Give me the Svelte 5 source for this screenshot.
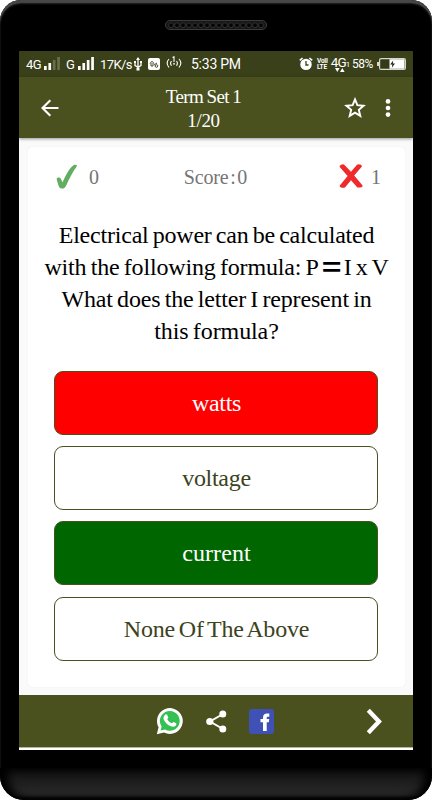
<script>
  const question = [
    { text: 'Electrical power can be calculated', track: -0.21, word: -1.6 },
    { text: 'with the following formula: P', tail: 'I x V', track: -0.16, word: -1.6 },
    { text: 'What does the letter I represent in', track: -0.16, word: -1.6 },
    { text: 'this formula?', track: -0.1, word: -1.6 }
  ];
  const answers = [
    { text: 'watts', state: 'wrong', track: -0.3 },
    { text: 'voltage', state: '', track: -0.3 },
    { text: 'current', state: 'right', track: 0.1 },
    { text: 'None Of The Above', state: '', track: -0.2 }
  ];
  const holes = Array.from({ length: 16 }, (_, i) => i);
</script>

<div class="phone">
  <div class="speaker">
    <svg width="102" height="10" viewBox="0 0 102 10">
      <rect x=".5" y=".5" width="101" height="9" rx="4.5" fill="#171717" stroke="#3c3c3c" />
      {#each holes as i}
        <circle cx={6 + i * 6} cy="5.2" r="2.4" fill="#050505" stroke="#383838" stroke-width=".8" />
      {/each}
    </svg>
  </div>

  <div class="screen">
    <div class="status">
      <span class="net">4G</span>
      <svg class="bars1" width="16" height="13" viewBox="0 0 16 13">
        <path d="M0 9h2.7v4H0zM4.4 6h2.7v7H4.4z" fill="#fff" />
        <path d="M8.8 3h2.7v10H8.8zM13.2 0h2.7v13h-2.7z" fill="#697047" />
      </svg>
      <span class="g">G</span>
      <svg class="bars2" width="16" height="13" viewBox="0 0 16 13">
        <path d="M0 9h2.7v4H0zM4.4 6h2.7v7H4.4zM8.8 3h2.7v10H8.8zM13.2 0h2.7v13h-2.7z" fill="#fff" />
      </svg>
      <span class="speed">17K/s</span>
      <svg class="usb" width="8" height="14" viewBox="0 0 8 14" fill="none" stroke="#fff" stroke-width="1.3">
        <path d="M4 1v11M1 5v3.5l3 1.5 3-1.5V5" />
        <path d="M2 3l2-3 2 3zM0 4h2v2H0zM6 4h2v2H6zM2.500 10.500h3v3h-3z" fill="#fff" stroke="none" />
      </svg>
      <svg class="app" width="12" height="12" viewBox="0 0 12 12">
        <rect width="12" height="12" rx="2" fill="#fff" />
        <path d="M2 5.500l2-2.300 2 2.300M3 5v3h2V5M6 7l3-2" stroke="#3a4019" stroke-width=".9" fill="none" />
        <circle cx="8.500" cy="8" r="1.300" stroke="#3a4019" stroke-width=".9" fill="none" />
      </svg>
      <svg class="wave" width="16" height="13" viewBox="0 0 16 13" fill="none" stroke="#fff" stroke-width="1.1">
        <path d="M3 3Q-.7 7 3 11.500M5.500 5Q3.700 7.300 5.500 9.800M13 3q3.700 4 0 8.500M10.500 5q1.800 2.300 0 4.800M6.500 1.500L8 .8V6" />
        <circle cx="8" cy="7.800" r=".9" fill="#fff" stroke="none" />
      </svg>
      <span class="clock">5:33 PM</span>
      <svg class="alarm" width="14" height="14" viewBox="0 0 14 14">
        <circle cx="7" cy="7.400" r="5.700" fill="#fff" />
        <path d="M.8 3.400L3.600 1M13.200 3.400L10.400 1" stroke="#fff" stroke-width="1.600" />
        <path d="M7 4v4h2.500" fill="none" stroke="#3a4019" stroke-width="1.300" />
      </svg>
      <span class="volte"><b>VoII</b><b>LTE</b></span>
      <span class="data">
        <span>4G<i>1</i></span>
        <svg width="10" height="4" viewBox="0 0 10 4"><path d="M0 0h4.600L2.300 4zM5 4h4.600L7.300 0z" fill="#fff" /></svg>
      </span>
      <span class="percent">58%</span>
      <svg class="battery" width="29" height="12" viewBox="0 0 29 12">
        <rect x="2.600" y=".6" width="25.800" height="10.800" rx="1.500" fill="#343a18" stroke="#d7d8cd" stroke-width="1.200" />
        <path d="M12.500 1.200h15v9.600h-15z" fill="#fff" />
        <path d="M0 4h2.500v4H0z" fill="#d7d8cd" />
        <path d="M16.200 2.500l-3 4h2.200l-.6 3.200 3.200-4.300h-2.200z" fill="#20230e" />
      </svg>
    </div>

    <header>
      <svg class="back" width="18" height="18" viewBox="0 0 18 18" fill="none" stroke="#fff" stroke-width="2.1">
        <path d="M17.500 9H1.800M9.300 1.200L1.500 9l7.800 7.800" />
      </svg>
      <div class="title"><span class="name">Term Set 1</span><span class="count">1/20</span></div>
      <svg class="star" width="22" height="21" viewBox="0 0 22 21" fill="none" stroke="#fff" stroke-width="1.900">
        <path d="M11 2.400l2.350 5.800 6.250.5-4.800 4.100 1.500 6.100L11 15.600l-5.300 3.300 1.500-6.100-4.800-4.100 6.250-.5z" />
      </svg>
      <svg class="more" width="6" height="18" viewBox="0 0 6 18" fill="#fff">
        <circle cx="3" cy="2.400" r="2.350" /><circle cx="3" cy="9" r="2.350" /><circle cx="3" cy="15.600" r="2.350" />
      </svg>
    </header>

    <main>
      <section class="card">
        <div class="score">
          <div class="good">
            <svg width="22" height="25" viewBox="0 0 22 25">
              <path d="M.7 15.500C.7 13 4.500 13 5 15.300L6.600 18.300C10 10.500 13.500 4 17.500 1.200c1.800-1.100 4.200-.3 3.200 1.300C16.500 8 13.500 14.500 10.200 21.400 9.200 23.600 7.800 24.800 6 24.500c-2.200 0-3.100-1.500-3.600-3.300z" fill="#62ae61" />
            </svg>
            <span>0</span>
          </div>
          <span class="points">Score : 0</span>
          <div class="bad">
            <svg width="24" height="24" viewBox="0 0 24 24">
              <path d="M.7 3C0 1.500 3.800-.7 5.500.9L12 7.800 18 .8c1.600-1.500 5.800.2 4.700 1.900L15.200 11.600l8.200 9.700c.8 1.600-1.600 2.500-5 2.200L12 16.200l-5.800 7c-2 1.500-6.200 0-5.400-1.700L8.600 12z" fill="#ee2a2d" />
            </svg>
            <span>1</span>
          </div>
        </div>

        <div class="question">
          {#each question as line}
            <p style="letter-spacing: {line.track}px; word-spacing: {line.word}px">
              {line.text}{#if line.tail}<i class="eq">=</i>{line.tail}{/if}
            </p>
          {/each}
        </div>

        <div class="answers">
          {#each answers as a}
            <button class={a.state} style="letter-spacing: {a.track}px">{a.text}</button>
          {/each}
        </div>
      </section>
    </main>

    <footer>
      <svg class="whatsapp" width="28" height="28" viewBox="0 0 28 28">
        <path d="M.8 27.200L2.600 20.300A12.900 12.900 0 1 1 8 25.500z" fill="#fff" />
        <path d="M4.600 23.600l1-4.100A9.900 9.900 0 1 1 9 22.600z" fill="#34c151" />
        <path d="M9.400 7.600c.5-.4 1.400-.5 1.800.3l1 2.400c.2.7-.8 1.500-.9 2 1 2 2.300 3.100 4.400 4 .7-.2 1.200-1.500 1.900-1.400l2.500 1.300c.6.5.1 2.200-.7 2.800-1.300 1-3 .9-4.500.3-3.300-1.200-5.400-3.300-7-6.200-.9-2-.3-4.200 1.500-5.500z" fill="#fff" />
      </svg>
      <svg class="share" width="21" height="23" viewBox="0 0 21 23">
        <path d="M17 4L4 11.500l13 7.500" fill="none" stroke="#fff" stroke-width="2" />
        <circle cx="16.800" cy="4" r="3.500" fill="#fff" /><circle cx="3.800" cy="11.500" r="3.600" fill="#fff" /><circle cx="16.800" cy="19" r="3.500" fill="#fff" />
      </svg>
      <svg class="facebook" width="25" height="25" viewBox="0 0 25 25">
        <rect width="25" height="25" rx="3" fill="#4051b5" />
        <path d="M14 22v-8.700h-2.500V10H14V8.500c0-2.700 1.600-4 4-4h2.300v3.300h-1.400c-.8 0-1.200.4-1.200 1.200v1h2.500l-.4 3.300h-2.100V22z" fill="#fff" />
      </svg>
      <svg class="next" width="17" height="27" viewBox="0 0 17 27" fill="none" stroke="#fff" stroke-width="4.300">
        <path d="M2.300 2.300L13 13.500 2.300 24.700" />
      </svg>
    </footer>
    <div class="edge"></div>
  </div>

  <div class="chin"></div>
</div>

<style>
  :global(body) { background: #fff; }
  .phone {
    box-sizing: border-box; width: 432px; height: 800px; background: #000; overflow: hidden;
    border-radius: 21px 21px 24px 24px; display: flex; flex-direction: column; align-items: center;
    box-shadow: inset 0 3px 1px #484848, inset 0 4px 2px #242424;
  }
  svg { display: block; flex: none; }
  .speaker { height: 31px; padding-top: 20px; }
  .screen { width: 394px; height: 699px; display: flex; flex-direction: column; background: #fafafa; }
  .status {
    height: 26px; background: #3a4019; color: #fff; display: flex; align-items: center;
    font-family: Roboto, "Liberation Sans", sans-serif; font-size: 13px; white-space: nowrap; flex: none;
  }
  .status > span { flex: none; }
  .net { width: 18px; margin-left: 7px; letter-spacing: -.6px; }
  .bars1, .bars2 { margin-bottom: 1px; }
  .g { width: 12px; margin-left: 6px; }
  .speed { width: 33px; margin-left: 6px; font-size: 13px; letter-spacing: -.6px; }
  .usb { margin-left: 1px; }
  .app { margin-left: 6px; }
  .wave { margin-left: 6px; margin-bottom: 3px; }
  .clock { margin-left: 9px; width: 51px; font-size: 14px; letter-spacing: -.25px; }
  .alarm { margin-left: 57px; margin-bottom: 1px; }
  .volte { margin-left: 4px; width: 13px; display: flex; flex-direction: column; font-size: 6.500px; line-height: 6.500px; letter-spacing: -.2px; }
  .data { width: 18px; margin-left: 1px; display: flex; flex-direction: column; align-items: center; font-size: 13.500px; line-height: 11px; letter-spacing: -1px; }
  .data > span { height: 11px; }
  .data i { font-size: 8px; line-height: 8px; font-style: normal; }
  .percent { margin-left: 3px; width: 24px; font-size: 12px; letter-spacing: -.5px; }
  .battery { margin-left: 1px; }
  header {
    height: 61px; flex: none; background: #4a511f; display: flex; align-items: center; color: #fff;
    font-family: "Liberation Serif", serif; position: relative; box-shadow: 0 1px 3px #0006;
  }
  .back { margin-left: 22px; }
  .title {
    flex: 1; display: flex; flex-direction: column; align-items: center; padding: 2px 0 0 4px;
    font-size: 19px; line-height: 24px;
  }
  .name { letter-spacing: -.6px; word-spacing: -.8px; }
  .count { letter-spacing: -.35px; }
  .more { margin: 0 22px 0 19px; }
  main { height: 557px; box-sizing: border-box; padding: 9px 8px 8px 9px; }
  .card { box-sizing: border-box; height: 540px; background: #fff; border-radius: 4px; box-shadow: 0 0 1px #0002; font-family: "Liberation Serif", serif; }
  .score { height: 58px; display: flex; align-items: center; justify-content: space-between; color: #757575; font-size: 20px; }
  .good, .bad { display: flex; align-items: center; }
  .good span, .points, .bad span { padding-top: 2px; }
  .good { padding-left: 28px; gap: 11px; width: 73px; }
  .points { word-spacing: -3px; letter-spacing: -.2px; margin-left: 1px; }
  .bad { padding-right: 24px; gap: 8px; width: 80px; justify-content: flex-end; }
  .question { padding-top: 13.500px; height: 155px; box-sizing: border-box; color: #000; font-size: 24px; line-height: 32px; text-align: center; }
  .question p { margin: 0; white-space: nowrap; height: 32px; }
  .eq { display: inline-block; font: bold 26px/20px "Liberation Sans", sans-serif; width: 25px; letter-spacing: 0; text-align: center; transform: translateY(1px) scaleX(1.3); }
  .answers { padding: 11px 27px 0 26px; display: flex; flex-direction: column; gap: 11.200px; }
  .answers button {
    height: 64px; border: 1px solid #4a511f; border-radius: 9px; background: #fff; color: #3c431d;
    font: 24px "Liberation Serif", serif; word-spacing: -2px; padding: 1px 0 0 1px;
  }
  .answers .wrong { background: #f00; color: #fff; }
  .answers .right { background: #060; color: #fff; }
  footer { height: 52px; flex: none; display: flex; align-items: center; background: #4a511f; box-sizing: border-box; }
  .whatsapp { margin-left: 137px; }
  .share { margin-left: 22px; }
  .facebook { margin-left: 22px; }
  .next { margin-left: 92px; }
  .edge { height: 3px; flex: none; background: linear-gradient(#b5b69c 1px, #fff 1px); }
  .chin { margin-top: 18px; width: 432px; height: 32px; border-radius: 0 0 24px 24px; background: linear-gradient(#101010, #2a2a2a 85%, #080808 96%); box-shadow: inset 8px 0 8px #000, inset -8px 0 8px #000; }
</style>
